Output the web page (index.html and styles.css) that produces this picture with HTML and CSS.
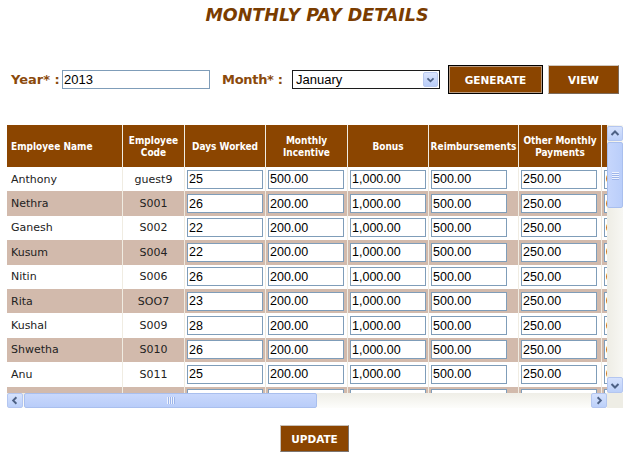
FILE: index.html
```html
<!DOCTYPE html>
<html lang="en">
<head>
<meta charset="utf-8">
<title>Monthly Pay Details</title>
<link rel="stylesheet" href="styles.css">
</head>
<body>
<h1 class="title">MONTHLY PAY DETAILS</h1>

<div class="filters">
  <label class="flabel year-label">Year* :</label>
  <input class="text-in year-in" type="text" value="2013">
  <label class="flabel month-label">Month* :</label>
  <div class="select">
    <span class="select-text">January</span>
    <span class="select-btn">
      <svg width="15" height="16" viewBox="0 0 15 16"><polyline points="4,6 7.5,9.5 11,6" fill="none" stroke="#4d6185" stroke-width="2"/></svg>
    </span>
  </div>
  <button class="btn btn-gen">GENERATE</button>
  <button class="btn btn-view">VIEW</button>
</div>

<div class="grid-box">
  <div class="viewport">
    <table class="pay">
      <colgroup>
        <col class="c-name"><col class="c-code"><col class="c-days"><col class="c-inc"><col class="c-bonus"><col class="c-reimb"><col class="c-other"><col class="c-extra">
      </colgroup>
      <thead>
        <tr>
          <th class="th-left">Employee Name</th>
          <th>Employee<br>Code</th>
          <th>Days Worked</th>
          <th>Monthly<br>Incentive</th>
          <th>Bonus</th>
          <th>Reimbursements</th>
          <th>Other Monthly<br>Payments</th>
          <th></th>
        </tr>
      </thead>
      <tbody>
        <tr>
          <td class="name">Anthony</td><td class="code">guest9</td>
          <td><input class="cell-in" value="25"></td><td><input class="cell-in" value="500.00"></td><td><input class="cell-in" value="1,000.00"></td><td><input class="cell-in" value="500.00"></td><td><input class="cell-in" value="250.00"></td><td><input class="cell-in" value="0"></td>
        </tr>
        <tr class="alt">
          <td class="name">Nethra</td><td class="code">S001</td>
          <td><input class="cell-in" value="26"></td><td><input class="cell-in" value="200.00"></td><td><input class="cell-in" value="1,000.00"></td><td><input class="cell-in" value="500.00"></td><td><input class="cell-in" value="250.00"></td><td><input class="cell-in" value="0"></td>
        </tr>
        <tr>
          <td class="name">Ganesh</td><td class="code">S002</td>
          <td><input class="cell-in" value="22"></td><td><input class="cell-in" value="200.00"></td><td><input class="cell-in" value="1,000.00"></td><td><input class="cell-in" value="500.00"></td><td><input class="cell-in" value="250.00"></td><td><input class="cell-in" value="0"></td>
        </tr>
        <tr class="alt">
          <td class="name">Kusum</td><td class="code">S004</td>
          <td><input class="cell-in" value="22"></td><td><input class="cell-in" value="200.00"></td><td><input class="cell-in" value="1,000.00"></td><td><input class="cell-in" value="500.00"></td><td><input class="cell-in" value="250.00"></td><td><input class="cell-in" value="0"></td>
        </tr>
        <tr>
          <td class="name">Nitin</td><td class="code">S006</td>
          <td><input class="cell-in" value="26"></td><td><input class="cell-in" value="200.00"></td><td><input class="cell-in" value="1,000.00"></td><td><input class="cell-in" value="500.00"></td><td><input class="cell-in" value="250.00"></td><td><input class="cell-in" value="0"></td>
        </tr>
        <tr class="alt">
          <td class="name">Rita</td><td class="code">SOO7</td>
          <td><input class="cell-in" value="23"></td><td><input class="cell-in" value="200.00"></td><td><input class="cell-in" value="1,000.00"></td><td><input class="cell-in" value="500.00"></td><td><input class="cell-in" value="250.00"></td><td><input class="cell-in" value="0"></td>
        </tr>
        <tr>
          <td class="name">Kushal</td><td class="code">S009</td>
          <td><input class="cell-in" value="28"></td><td><input class="cell-in" value="200.00"></td><td><input class="cell-in" value="1,000.00"></td><td><input class="cell-in" value="500.00"></td><td><input class="cell-in" value="250.00"></td><td><input class="cell-in" value="0"></td>
        </tr>
        <tr class="alt">
          <td class="name">Shwetha</td><td class="code">S010</td>
          <td><input class="cell-in" value="26"></td><td><input class="cell-in" value="200.00"></td><td><input class="cell-in" value="1,000.00"></td><td><input class="cell-in" value="500.00"></td><td><input class="cell-in" value="250.00"></td><td><input class="cell-in" value="0"></td>
        </tr>
        <tr>
          <td class="name">Anu</td><td class="code">S011</td>
          <td><input class="cell-in" value="25"></td><td><input class="cell-in" value="200.00"></td><td><input class="cell-in" value="1,000.00"></td><td><input class="cell-in" value="500.00"></td><td><input class="cell-in" value="250.00"></td><td><input class="cell-in" value="0"></td>
        </tr>
        <tr class="alt">
          <td class="name"></td><td class="code"></td>
          <td><input class="cell-in" value=""></td><td><input class="cell-in" value=""></td><td><input class="cell-in" value=""></td><td><input class="cell-in" value=""></td><td><input class="cell-in" value=""></td><td><input class="cell-in" value=""></td>
        </tr>
      </tbody>
    </table>
  </div>

  <div class="vscroll">
    <span class="sb-btn sb-up"><svg width="14" height="13" viewBox="0 0 14 13"><polyline points="3.5,8 7,4.5 10.5,8" fill="none" stroke="#4d6185" stroke-width="2"/></svg></span>
    <span class="sb-thumb v-thumb"><span class="grip-h"></span><span class="grip-h"></span><span class="grip-h"></span><span class="grip-h"></span></span>
    <span class="sb-fill"></span>
    <span class="sb-btn sb-down"><svg width="14" height="15" viewBox="0 0 14 15"><polyline points="3.5,6 7,9.5 10.5,6" fill="none" stroke="#4d6185" stroke-width="2"/></svg></span>
  </div>

  <div class="hscroll">
    <span class="sb-btn sb-left"><svg width="15" height="15" viewBox="0 0 15 15"><polyline points="9,4 5.5,7.5 9,11" fill="none" stroke="#4d6185" stroke-width="2"/></svg></span>
    <span class="sb-thumb h-thumb"><span class="grip-v"></span><span class="grip-v"></span><span class="grip-v"></span><span class="grip-v"></span></span>
    <span class="sb-fill"></span>
    <span class="sb-btn sb-right"><svg width="15" height="15" viewBox="0 0 15 15"><polyline points="6,4 9.5,7.5 6,11" fill="none" stroke="#4d6185" stroke-width="2"/></svg></span>
  </div>
  <div class="corner"></div>
</div>

<div class="actions">
  <button class="btn btn-update">UPDATE</button>
</div>
</body>
</html>
```

FILE: styles.css
```css
* { box-sizing: border-box; }

body {
  margin: 0;
  width: 634px;
  background: #ffffff;
  font-family: "DejaVu Sans", Verdana, sans-serif;
  color: #222222;
}

.title {
  margin: 0;
  padding-top: 5px;
  height: 26px;
  font-size: 17.5px;
  line-height: 21px;
  font-weight: bold;
  font-style: italic;
  text-align: center;
  color: #7a3c00;
}

/* filter row */
.filters {
  display: flex;
  align-items: center;
  height: 29px;
  margin-top: 39px;
  padding-left: 11px;
}

.flabel {
  font-size: 13px;
  font-weight: bold;
  color: #8b4a0c;
  white-space: nowrap;
}

.year-label { width: 51px; }
.month-label { width: 70px; margin-left: 12px; letter-spacing: -0.3px; }

.text-in {
  height: 19px;
  border: 1px solid #7f9db9;
  padding: 0 1px;
  font-family: "Liberation Sans", Arial, sans-serif;
  font-size: 13px;
  color: #000;
  outline: none;
}

.year-in { width: 148px; }

.select {
  display: flex;
  align-items: center;
  justify-content: space-between;
  width: 148px;
  height: 19px;
  border: 1px solid #1c1c1c;
  padding: 0 1px 0 3px;
  font-family: "Liberation Sans", Arial, sans-serif;
  font-size: 13px;
  color: #000;
}

.select-btn {
  display: flex;
  width: 15px;
  height: 15px;
  border: 1px solid #b9c9ef;
  border-radius: 2px;
  background: linear-gradient(#dbe5fd, #b9cdf8);
  align-items: center;
  justify-content: center;
}

.select-btn svg { display: block; }

.btn {
  background: #8b4500;
  color: #ffffff;
  font-family: "DejaVu Sans", Verdana, sans-serif;
  font-weight: bold;
  font-size: 10.5px;
  padding: 0;
  cursor: pointer;
}

.btn-gen {
  width: 95px;
  height: 29px;
  margin-left: 8px;
  border: 1px solid #000000;
  box-shadow: inset 0 0 0 1px #b89a80;
}

.btn-view {
  width: 71px;
  height: 29px;
  margin-left: 5px;
  border: 1px solid;
  border-color: #d0c8c0 #7c6a5a #7c6a5a #d0c8c0;
}

/* grid with scroll bars */
.grid-box {
  display: grid;
  grid-template-columns: 600px 16px;
  grid-template-rows: 268px 15px;
  width: 616px;
  margin-top: 31px;
  margin-left: 7px;
}

.viewport {
  overflow: hidden;
}

.pay {
  table-layout: fixed;
  width: 677px;
  margin-left: -1px;
  border-collapse: separate;
  border-spacing: 1px 0;
  background: #f0ece2;
}

.c-name { width: 115px; }
.c-code { width: 61px; }
.c-days { width: 80px; }
.c-inc { width: 81px; }
.c-bonus { width: 80px; }
.c-reimb { width: 89px; }
.c-other { width: 82px; }
.c-extra { width: 80px; }

.pay thead tr { height: 42px; }

.pay th {
  background: #8b4500;
  color: #ffffff;
  font-family: "DejaVu Sans Condensed", "DejaVu Sans", sans-serif;
  font-stretch: condensed;
  font-size: 10px;
  font-weight: bold;
  line-height: 12px;
  padding: 1px 0 0;
  text-align: center;
  white-space: nowrap;
  overflow: hidden;
}

.pay th.th-left {
  text-align: left;
  padding-left: 4px;
}

.pay tbody tr { height: 24.4px; }

.pay td {
  background: #ffffff;
  font-size: 11px;
  padding: 0;
  white-space: nowrap;
  overflow: hidden;
}

.pay tr.alt td { background: #d2baac; }

.pay td.name { padding-left: 4px; }
.pay td.code { text-align: center; }

.cell-in {
  display: block;
  width: 76px;
  height: 19px;
  margin-left: 2px;
  border: 1px solid #7f9db9;
  padding: 0 1px;
  font-family: "Liberation Sans", Arial, sans-serif;
  font-size: 12.5px;
  color: #000;
  background: #ffffff;
  outline: none;
}

/* scrollbars */
.vscroll {
  display: flex;
  flex-direction: column;
  padding-top: 1px;
  background: linear-gradient(to right, #eeede5, #f7f7f3);
}

.hscroll {
  display: flex;
  background: linear-gradient(#efeee7, #fdfdfb);
}

.corner { background: #eeede5; }

.sb-fill { flex: 1; }

.sb-btn {
  display: flex;
  align-items: center;
  justify-content: center;
  border: 1px solid #b4c6f0;
  border-radius: 2px;
  background: linear-gradient(#d6e2fd, #bcd0f9);
}

.sb-btn svg { display: block; }

.vscroll .sb-btn { width: 16px; height: 15px; }
.vscroll .sb-down { height: 16px; }
.hscroll .sb-btn { width: 16px; height: 15px; }

.sb-thumb {
  display: flex;
  align-items: center;
  justify-content: center;
  border: 1px solid #a9bfee;
  border-radius: 2px;
}

.v-thumb {
  flex-direction: column;
  height: 66px;
  margin-top: 1px;
  gap: 1px;
  background: linear-gradient(to right, #c6d6fc, #bacefa);
}

.h-thumb {
  width: 293px;
  margin-left: 1px;
  gap: 1px;
  background: linear-gradient(#c9d8fc, #b9cdf9);
}

.grip-h {
  display: block;
  width: 7px;
  height: 1px;
  background: #eef3fe;
  box-shadow: 0 1px 0 #9db5ea;
}

.grip-v {
  display: block;
  width: 1px;
  height: 7px;
  background: #eef3fe;
  box-shadow: 1px 0 0 #9db5ea;
}

.actions {
  display: flex;
  justify-content: center;
  margin-top: 17px;
  padding-right: 5px;
}

.btn-update {
  width: 69px;
  height: 27px;
  border: 1px solid;
  border-color: #c8c0b8 #7c7470 #7c7470 #c8c0b8;
}
```
